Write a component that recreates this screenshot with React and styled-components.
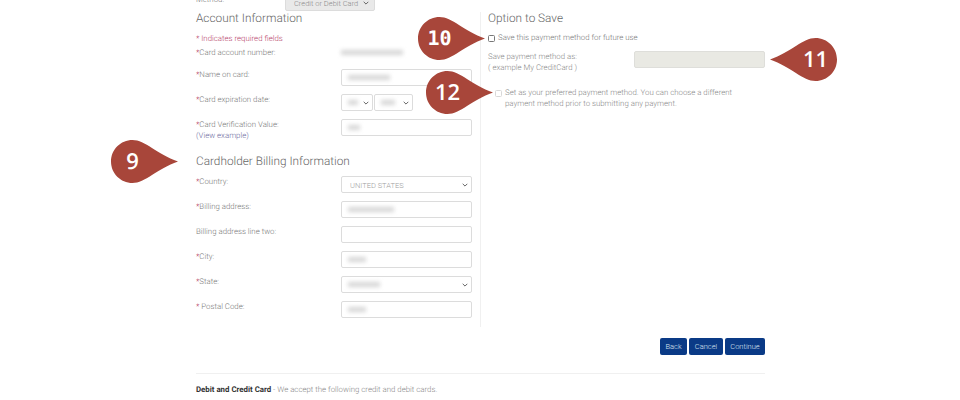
import React from 'react';
import styled, { createGlobalStyle } from 'styled-components';

const chevron = `url("data:image/svg+xml,%3Csvg xmlns='http://www.w3.org/2000/svg' width='6' height='4' viewBox='0 0 6 4'%3E%3Cpath d='M.7.8 3 3.1 5.3.8' fill='none' stroke='%23666' stroke-width='1'/%3E%3C/svg%3E")`;

const GlobalStyle = createGlobalStyle`
    html, body {
        margin: 0;
        height: 400px;
        overflow: hidden;
        background: #fff;
        font-family: 'Roboto', 'Liberation Sans', sans-serif;
        font-weight: 300;
        color: #7a7a7a;
        text-rendering: geometricPrecision;
    }
`;

function Marker({ side, top, left, label, mono }) {
    return (
        <MarkerBox $top={top} $left={left}>
            <svg width="67" height="43" viewBox="0 0 67 43">
                <path
                    d={side === 'right'
                        ? 'M0 21.5C0 9.6 9.6 0 21.5 0C34 0 46 14 67 21.5C46 29 34 43 21.5 43C9.6 43 0 33.4 0 21.5Z'
                        : 'M67 21.5C67 9.6 57.4 0 45.5 0C33 0 21 14 0 21.5C21 29 33 43 45.5 43C57.4 43 67 33.4 67 21.5Z'}
                    fill="#a8463a"
                />
            </svg>
            <MarkerText $side={side} $mono={mono}>{label}</MarkerText>
        </MarkerBox>
    );
}

function FieldRow({ label, required, spaced, children, link }) {
    return (
        <Row>
            <Label>
                {required && <Star>{spaced ? '* ' : '*'}</Star>}{label}
                {link && <ViewLink href="#">(View example)</ViewLink>}
            </Label>
            {children}
        </Row>
    );
}

function App() {
    return (
        <Page>
            <GlobalStyle />
            <MethodRow>
                <Label>Method:</Label>
                <MethodSelect><option>Credit or Debit Card</option></MethodSelect>
            </MethodRow>

            <Columns>
                <LeftColumn>
                    <Heading>Account Information</Heading>
                    <Required>* Indicates required fields</Required>
                    <AccountRow>
                        <Label><Star>*</Star>Card account number:</Label>
                        <Value><Smudge $width={62} /></Value>
                    </AccountRow>
                    <FieldRow label="Name on card:" required>
                        <Field><Smudge $width={42} /></Field>
                    </FieldRow>
                    <FieldRow label="Card expiration date:" required>
                        <DateFields>
                            <SelectWrap $width={32}><Select /><Smudge $width={10} /></SelectWrap>
                            <SelectWrap $width={39}><Select /><Smudge $width={14} /></SelectWrap>
                        </DateFields>
                    </FieldRow>
                    <CvvRow>
                        <FieldRow label="Card Verification Value:" required link>
                            <Field><Smudge $width={12} /></Field>
                        </FieldRow>
                    </CvvRow>

                    <BillingHeading>Cardholder Billing Information</BillingHeading>
                    <FieldRow label="Country:" required>
                        <SelectWrap><Select><option>UNITED STATES</option></Select></SelectWrap>
                    </FieldRow>
                    <FieldRow label="Billing address:" required>
                        <Field><Smudge $width={46} /></Field>
                    </FieldRow>
                    <FieldRow label="Billing address line two:">
                        <Field />
                    </FieldRow>
                    <FieldRow label="City:" required>
                        <Field><Smudge $width={18} /></Field>
                    </FieldRow>
                    <FieldRow label="State:" required>
                        <SelectWrap><Select /><Smudge $width={32} /></SelectWrap>
                    </FieldRow>
                    <FieldRow label="Postal Code:" required spaced>
                        <Field><Smudge $width={18} /></Field>
                    </FieldRow>
                </LeftColumn>

                <RightColumn>
                    <Heading>Option to Save</Heading>
                    <CheckRow>
                        <Check type="checkbox" />
                        <span>Save this payment method for future use</span>
                    </CheckRow>
                    <SaveRow>
                        <SaveLabel>Save payment method as:<br />( example My CreditCard )</SaveLabel>
                        <DisabledField />
                    </SaveRow>
                    <PreferredRow>
                        <Check type="checkbox" disabled />
                        <span>Set as your preferred payment method. You can choose a different<br />payment method prior to submitting any payment.</span>
                    </PreferredRow>
                </RightColumn>
            </Columns>

            <Buttons>
                <Button $width={27}>Back</Button>
                <Button $width={34}>Cancel</Button>
                <Button $width={40}>Continue</Button>
            </Buttons>

            <Footer>
                <strong>Debit and Credit Card</strong> - We accept the following credit and debit cards.
            </Footer>

            <Marker side="right" top={146} left={-85} label="9" />
            <Marker side="right" top={23} left={222} label="10" mono />
            <Marker side="left" top={44} left={574} label="11" />
            <Marker side="right" top={77} left={230} label="12" />
        </Page>
    );
}

const Page = styled.div`
    position: relative;
    width: 569px;
    margin: -6px 0 0 196px;
    font-size: 7.85px;
    line-height: 10.5px;
`;

const MethodRow = styled.div`
    display: grid;
    grid-template-columns: 89px 90px;
    height: 17px;
    margin-bottom: 1px;
`;

const MethodSelect = styled.select`
    appearance: none;
    height: 17px;
    padding: 1px 8px 0;
    border: 1px solid #dcdcdc;
    border-radius: 2px;
    background: #e9e9e9 ${chevron} no-repeat right 5px center;
    color: #8a8a8a;
    font: 300 7.5px 'Roboto', sans-serif;
`;

const Columns = styled.div`
    display: grid;
    grid-template-columns: 285px 1fr;
`;

const LeftColumn = styled.div`
    height: 315px;
    padding-right: 8px;
    border-right: 1px solid #f0f0f0;
    box-sizing: border-box;
`;

const RightColumn = styled.div`
    padding-left: 7px;
`;

const Heading = styled.h2`
    margin: 0;
    font-size: 11.8px;
    line-height: 12px;
    font-weight: 300;
    color: #666;
    white-space: nowrap;
`;

const BillingHeading = styled(Heading)`
    margin: 15px 0 9px;
`;

const Required = styled.div`
    margin-top: 9px;
    color: #b8466c;
    line-height: 11px;
`;

const AccountRow = styled.div`
    display: grid;
    grid-template-columns: 145px 131px;
    margin: 3px 0 11px;
    height: 11px;
`;

const Value = styled.div`
    display: flex;
    align-items: center;
`;

const Row = styled.div`
    display: grid;
    grid-template-columns: 145px 131px;
    align-items: start;
    margin-bottom: 8px;
`;

const CvvRow = styled.div`
    height: 21px;
`;

const Label = styled.div`
    padding-top: 1px;
    line-height: 10.5px;
    white-space: nowrap;
`;

const Star = styled.span`
    color: #b23a62;
`;

const ViewLink = styled.a`
    display: block;
    color: #6d6aa0;
    text-decoration: none;
`;

const Field = styled.div`
    display: flex;
    align-items: center;
    box-sizing: border-box;
    height: 17px;
    padding: 0 6px;
    border: 1px solid #dcdcdc;
    border-radius: 2px;
    background: #fff;
`;

const Smudge = styled.span`
    display: block;
    width: ${(p) => p.$width}px;
    height: 5px;
    background: #d6d6d6;
    filter: blur(2px);
`;

const DateFields = styled.div`
    display: flex;
    gap: 1px;
`;

const SelectWrap = styled.div`
    position: relative;
    width: ${(p) => (p.$width ? `${p.$width}px` : '100%')};
    height: 17px;

    ${Smudge} {
        position: absolute;
        top: 6px;
        left: 7px;
    }
`;

const Select = styled.select`
    appearance: none;
    display: block;
    width: 100%;
    height: 17px;
    padding: 1px 8px 0;
    border: 1px solid #dcdcdc;
    border-radius: 2px;
    background: #fff ${chevron} no-repeat right 3px center;
    color: #a0a0a0;
    font: 300 7.5px 'Roboto', sans-serif;
`;

const CheckRow = styled.label`
    display: flex;
    align-items: center;
    gap: 3px;
    margin-top: 9px;
    height: 11px;
    white-space: nowrap;
`;

const Check = styled.input`
    appearance: none;
    box-sizing: border-box;
    width: 7px;
    height: 7px;
    margin: 0;
    flex: none;
    border: 1px solid #777;
    border-radius: 1.5px;
    background: #fff;

    &:disabled {
        border-color: #d8d8d8;
    }
`;

const SaveRow = styled.div`
    display: grid;
    grid-template-columns: 146px 131px;
    margin-top: 7px;
    height: 21px;
`;

const SaveLabel = styled.div`
    padding-top: 1px;
    color: #8a8a8a;
    white-space: nowrap;
`;

const DisabledField = styled.div`
    box-sizing: border-box;
    height: 17px;
    border: 1px solid #dededa;
    border-radius: 2px;
    background: #e9e9e3;
`;

const PreferredRow = styled.div`
    display: flex;
    align-items: flex-start;
    gap: 3px;
    margin: 16px 0 0 7px;
    color: #8a8a8a;
    white-space: nowrap;

    ${Check} {
        margin-top: 2px;
    }
`;

const Buttons = styled.div`
    display: flex;
    justify-content: flex-end;
    gap: 2px;
    margin-top: 11px;
`;

const Button = styled.button`
    width: ${(p) => p.$width}px;
    height: 17px;
    padding: 0;
    border: 0;
    border-radius: 2px;
    background: #0a3a86;
    color: #dfe6f2;
    font: 300 7.5px 'Roboto', sans-serif;
`;

const Footer = styled.div`
    margin-top: 18px;
    padding-top: 11px;
    border-top: 1px solid #f0f0f0;
    color: #8a8a8a;

    strong {
        color: #333;
        font-weight: 700;
    }
`;

const MarkerBox = styled.div`
    position: absolute;
    top: ${(p) => p.$top}px;
    left: ${(p) => p.$left}px;
    width: 67px;
    height: 43px;

    svg {
        display: block;
    }
`;

const MarkerText = styled.span`
    position: absolute;
    top: 0;
    left: ${(p) => (p.$side === 'right' ? '0' : '24px')};
    width: 43px;
    line-height: 43px;
    text-align: center;
    color: #fff;
    font-family: ${(p) => (p.$mono ? "'DejaVu Sans Mono', monospace" : "'Open Sans', sans-serif")};
    font-size: ${(p) => (p.$mono ? '20px' : '22px')};
    font-weight: ${(p) => (p.$mono ? 700 : 600)};
`;

export default App;
